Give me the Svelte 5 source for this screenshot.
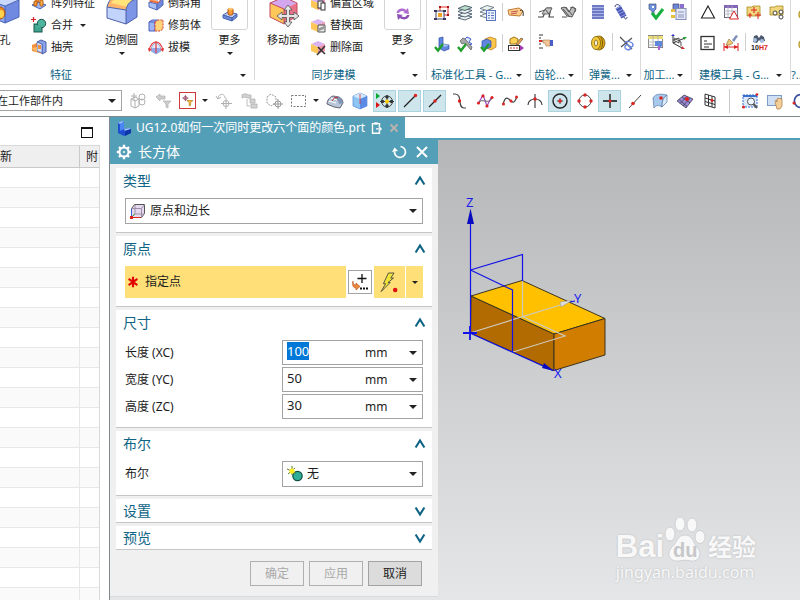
<script>
  import { onMount } from 'svelte';

  const cube = (a, b, c) =>
    `<path d="M1 5 8 2l7 3-7 3z" fill="${a}"/><path d="M1 5l7 3v7l-7-3z" fill="${b}"/><path d="M15 5 8 8v7l7-3z" fill="${c}"/>`;
  const tick = '<path d="M1 11l3 3.500 5-6.500" fill="none" stroke="#1f9e2c" stroke-width="2.400"/>';

  const icons = {
    hole: `<path d="M4 7 20 1l10 4-16 6z" fill="#c9d8fb"/><path d="M4 7l12 4v17L4 23z" fill="#8fa9ef"/><path d="M30 5 16 11v17l14-6z" fill="#6f8ae0"/><path d="M4 7l12 4 14-6M16 11v17M4 23l12 5 14-6V5" fill="none" stroke="#4a62b4"/><ellipse cx="11" cy="18" rx="5" ry="6" fill="#f08a1c" stroke="#b0530c"/><ellipse cx="12" cy="19" rx="3" ry="4" fill="#ffd34c"/>`,
    blend: `<path d="M1 12 C3 4 7 2 12 1l19 3c-5 1-9 4-11 11z" fill="#ffb66b"/><path d="M5 8c2-3 5-5 9-5l16 2c-4 1-7 4-8 7z" fill="#ffe37a"/><path d="M12 1l5-3 14 3v3z" fill="#c5d3f7"/><path d="M1 12l19 3v14L1 23z" fill="#c2d4fb"/><path d="M20 15c1-6 5-10 11-11v18l-11 7z" fill="#7d95e6"/><path d="M1 12C3 4 7 2 12 1l19 3c-6 1-10 5-11 11zM1 12v11l19 6V15M20 29l11-7V4" fill="none" stroke="#4a5fa8"/>`,
    moveFace: `<path d="M2 8 16 2l13 6-13 6z" fill="#d3a6ee"/><path d="M2 8l14 6v15L2 22z" fill="#ffc65a"/><path d="M29 8 16 14v15l13-8z" fill="#e9728a"/><path d="M2 8 16 2l13 6M2 8v14l14 7 13-8V8M2 8l14 6v15" fill="none" stroke="#c14b60"/><path d="M20 10l4 5h-2.500v4.500H26V17l5 4-5 4v-2.500h-4.500V27H24l-4 5-4-5h2.500v-4.500H14V25l-5-4 5-4v2.500h4.500V15H16z" fill="#e6e6e6" stroke="#5c5c5c" stroke-width=".9"/>`,
    pattern: `<path d="M1 10l6-3 8 3-6 4z" fill="#9db7f4" stroke="#4967b4"/><rect x="5" y="1" width="3" height="6" rx="1" fill="#ff9b33" stroke="#b4560e"/><rect x="9" y="5" width="3" height="6" rx="1" fill="#ffb84c" stroke="#b4560e"/><rect x="3" y="6" width="3" height="5" rx="1" fill="#ffa03a" stroke="#b4560e"/>`,
    unite: `<path d="M2.500 0v5M0 2.500h5" stroke="#e02020" stroke-width="1.200"/><rect x="3" y="7" width="8" height="8" fill="#3fa48f" stroke="#1b5549"/><circle cx="10.500" cy="6.500" r="4.200" fill="#4fb59f" stroke="#1b5549"/><path d="M4 8h6v3H5z" fill="#46ab96"/>`,
    shell: `<path d="M1 6l5-2v6l6 2v3L1 12z" fill="#f6913a"/><path d="M6 3l4-2 5 2v10l-4 2V5z" fill="#8ba3ea" stroke="#4a5fa8"/><path d="M6 3l5 2v9l-5-2z" fill="#d4dffb" stroke="#4a5fa8" stroke-width=".7"/><path d="M7 6h3v4H7z" fill="#f0923b"/><path d="M0 9l6-1v5z" fill="#ffb866"/>`,
    chamfer: `<path d="M1 4 7 0h8l-5 5z" fill="#c9d8fb" stroke="#5068b8"/><path d="M1 4l9 2v2L2 7z" fill="#ff9455"/><path d="M1 7l8 2v6l-8-3z" fill="#a9c0f7" stroke="#5068b8"/><path d="M9 9l6-6v7l-6 5z" fill="#7088dc" stroke="#5068b8"/><path d="M2 6 10 8l4-5" stroke="#e05533" fill="none"/>`,
    trim: `<path d="M1 5l3-2h6v9l-3 2H1z" fill="#9fb4f5" stroke="#4a5fc0"/><path d="M1 5h6v9" fill="none" stroke="#4a5fc0"/><path d="M7 5l3-2h5v9l-3 2H7z" fill="#ffd478" stroke="#d33a3a" stroke-dasharray="2 1"/>`,
    draft: `<path d="M8 3l4 4 1 5-5 3-5-3 1-5z" fill="#dfe7fb" stroke="#7d8bb8" stroke-width=".7"/><path d="M4.500 9h7l1.500 3-5 3-5-3z" fill="#8fa9ef"/><path d="M1 11C3 4 6 3 8 3s5 1 7 8M8 2v12" fill="none" stroke="#e23b3b" stroke-width="1.200"/><path d="M0 9l1 4 3-3zM16 9l-1 4-3-3z" fill="#e23b3b"/>`,
    boss: `<path d="M1 9l5-3 9 2-5 4z" fill="#bccdf8" stroke="#4a65b0"/><path d="M1 9v3l9 3v-3zM10 12v3l5-4V8z" fill="#6f8bde" stroke="#4a65b0"/><path d="M6 3v5c1 1.500 4 1.500 5 0V3z" fill="#ff9b33" stroke="#b4560e"/><ellipse cx="8.500" cy="3" rx="2.500" ry="1.200" fill="#ffc46b"/>`,
    cycle: `<path d="M1.500 7C2 3 7 1 11 4l2-2 1 6-6-1 2-1C7 4 5 5 4 7z" fill="#b06bd0"/><path d="M14.500 9c-.5 4-5.500 6-9.500 3l-2 2-1-6 6 1-2 1c3 2 5 1 6-1z" fill="#8b4fb5"/>`,
    offset: cube('#d9b4f0', '#ffc65a', '#ef94a8') + '<rect x="8" y="6" width="5" height="7" fill="#fff" stroke="#333"/><rect x="11" y="8" width="4" height="7" fill="#fff" stroke="#333"/>',
    replace: cube('#d9b4f0', '#ffc65a', '#ef94a8') + '<path d="M8 8h7v7H8z" fill="#eee" stroke="#555"/><path d="M9 11l5-2v3l-5 2z" fill="#999"/>',
    remove: cube('#d9b4f0', '#ffc65a', '#ef94a8') + '<path d="M8 8l7 7M15 7l-8 9" stroke="#333" stroke-width="1.500"/>',
    frames: `<rect x="6" y="2" width="8" height="8" fill="#fff" stroke="#d33"/><path d="M5 1h2v2H5zM13 1h2v2h-2zM13 9h2v2h-2z" fill="#a11"/><rect x="2" y="6" width="8" height="8" fill="#fff" stroke="#446"/><rect x="4" y="8" width="4" height="4" fill="#f4a025"/><path d="M0 5h3v2H0zM9 5h3v2H9zM0 13h3v2H0zM9 13h3v2H9z" fill="#3b3560"/>`,
    layers: `<g fill="#eef3f3" stroke="#456" stroke-width=".9"><path d="M1 13l7-3 7 2-7 3z"/><path d="M1 10l7-3 7 2-7 3z"/><path d="M1 6.500l7-3 7 2-7 3z"/><path d="M1 3.500l7-3 7 2-7 3z" fill="#b8dcc8"/></g>`,
    layerList: `<g fill="#eef3f3" stroke="#567" stroke-width=".8"><path d="M0 11l7-3 7 2-7 3z"/><path d="M0 7l7-3 7 2-7 3z"/><path d="M0 3.500l7-3 7 2-7 3z"/></g><rect x="6.500" y="5.500" width="9" height="10" fill="#eaf2ff" stroke="#5a75c0"/><path d="M8 8h2M11 8h3M8 10.500h2M11 10.500h3M8 13h2M11 13h3" stroke="#5a75c0"/>`,
    tag: `<path d="M0 5l11-2 4 3-3 5-11-1z" fill="#ffcf8a" stroke="#c07a35"/><path d="M3 7l7-1M3 9l6-1" stroke="#b55"/><path d="M12 6c2-3 4 1 3 5" fill="none" stroke="#333"/>`,
    checkPart: `<path d="M5 2l4-1v7l6 1v4l-5 2-5-3z" fill="#5f86e0" stroke="#2f4ea8" stroke-width=".7"/><path d="M9 8l6 1-4 2-5-2z" fill="#a9c2f7"/>` + tick,
    checkSketch: `<path d="M5 6l5-5 4 2-2 3 3 2-4 1" fill="#dce7fb" stroke="#3f5fd0"/><path d="M3 5l3-3 2 1 7 8-1 3-6-7-3 1z" fill="#a8a8a8" stroke="#555" stroke-width=".7"/>` + tick,
    checkAsm: `<path d="M5 3l5-2 6 2v8l-5 3-6-3z" fill="#ffc64c" stroke="#b07714" stroke-width=".7"/><path d="M2 5l5-2 4 2v6l-5 2-4-2z" fill="#5f86e0" stroke="#2f4ea8" stroke-width=".7"/>` + tick,
    partEdit: `<path d="M2 3l4-2 4 2v5H2z" fill="#ffd257" stroke="#9b7414"/><path d="M8 8l5-6 2 1-5 6z" fill="#f7a13a" stroke="#555" stroke-width=".7"/><rect x=".5" y="9.500" width="11" height="5" fill="#fff" stroke="#333"/><path d="M2 12h2M5 12h2M8 12h2" stroke="#d33"/><path d="M12 9l4 3-4 3z" fill="#a239b3"/>`,
    gearA: `<path d="M0 13h5l4-9h4l-2 9h5" fill="none" stroke="#444" stroke-width="1.200"/><path d="M4 10l4-6 6 0-3 6z" fill="#c4c4c4" stroke="#555" stroke-width=".8"/><path d="M7 5l4 5M1 8l6-2" stroke="#555"/>`,
    gearB: `<path d="M0 4l4-1 4 5 3-5 4 2-4 8-5-1z" fill="#bdbdbd" stroke="#444" stroke-width=".9"/><path d="M2 5l6 7M5 3l6 8M9 4c4-2 6 0 5 4M1 13h5" fill="none" stroke="#555"/>`,
    gearPick: `<path d="M1 1h4M1 4h2M1 7h4M1 10h2M1 14h4" stroke="#333"/><path d="M1 7h3" stroke="#d22" stroke-width="2"/><path d="M5 6h7v6H8l-1-3H5z" fill="#f4c79a" stroke="#a97744" stroke-width=".6"/><rect x="12" y="6" width="3" height="6" fill="#4a5cc8"/>`,
    springA: `<g fill="none" stroke="#3f4fae" stroke-width="1.700"><path d="M2 2h12M2 5h12M2 8h12M2 11h12M2 14h12"/></g><path d="M2 3.500h12M2 6.500h12M2 9.500h12M2 12.500h12" stroke="#aab4ea"/>`,
    springB: `<path d="M5 3l6 10" stroke="#4756b5" stroke-width="6"/><path d="M3 5l5-3M4 8l6-3M6 10l6-3M7 13l6-3" stroke="#aab4ea" stroke-width=".8"/><path d="M2 3c0-3 4-3 5-1M11 13c1 3 3 2 3 0" fill="none" stroke="#333a80"/>`,
    springC: `<ellipse cx="9" cy="8" rx="6" ry="7" fill="#d9a514" stroke="#7c5c06" stroke-width=".8"/><ellipse cx="6" cy="8" rx="4.500" ry="6.500" fill="#f3ca3c" stroke="#7c5c06" stroke-width=".8"/><ellipse cx="6" cy="8" rx="1.500" ry="3" fill="#fff" stroke="#7c5c06" stroke-width=".8"/><path d="M11 2c2 3 2 9 0 12" stroke="#7c5c06" fill="none"/>`,
    springD: `<path d="M2 2l12 12M14 3L3 12" stroke="#555" stroke-width="1.300"/><path d="M7 8c2-3 8-1 8 2s-4 2-5 0-5 2-2 4 6 0 4-3" fill="none" stroke="#5f7ee0" stroke-width="1.300"/>`,
    machCheck: `<path d="M1 0h7v5L6 7v3H4V7L1 5z" fill="#6e92de" stroke="#457" stroke-width=".7"/><path d="M4 2h2v2H4z" fill="#fff"/><path d="M4 9l4 5 7-9" fill="none" stroke="#17b03f" stroke-width="3"/>`,
    machList: `<path d="M2 0h6v5L6 7H4L2 5z" fill="#6a86da" stroke="#446" stroke-width=".7"/><rect x="5" y="4.500" width="10" height="11" fill="#e4e9f8" stroke="#8890b8"/><path d="M7 8h6M7 11h6M7 13h6" stroke="#8890b8"/><path d="M0 5h4v3H0zM0 11h4v3H0z" fill="#e8bf3c"/><path d="M9 0h4v4H9z" fill="#8a6fd0"/>`,
    machTable: `<rect x=".5" y="1.500" width="14" height="12" fill="#fff" stroke="#888"/><path d="M0 2h15v3H0z" fill="#e9dd78"/><path d="M0 8h15M0 11h15M5 2v11M10 2v11" stroke="#aaa" stroke-width=".8"/><path d="M7 7h7v5l-2 2-2-2H7z" fill="#5e86da"/><path d="M10 12h2v4h-2z" fill="#b05fd0"/>`,
    machAxis: `<path d="M2 1v8l9 5M2 9l12-5" fill="none" stroke="#333"/><path d="M3 4l7 4v4M2 6l6-2v5z" fill="#eee" stroke="#444" stroke-width=".9"/><path d="M12 3l4 0-3 3z" fill="#1fa030"/><path d="M11 12l3 3-4 0z" fill="#c33"/><path d="M0 2l2-2 2 2z" fill="#33c"/>`,
    triangle: `<path d="M8 2l6.500 12h-13z" fill="none" stroke="#222" stroke-width="1.100"/>`,
    gridWarn: `<rect x="1.500" y="1.500" width="13" height="12" fill="#fff" stroke="#667"/><path d="M1 1h14v3H1z" fill="#8466b8"/><path d="M1 7h14M1 10h14M5 2v12M9 2v12" stroke="#aab" stroke-width=".8"/><path d="M11 7l4.500 8h-9z" fill="#fff" stroke="#d22"/>`,
    folderPts: `<path d="M1 3h5l1-1h7v10H1z" fill="#f0d67c" stroke="#a88a20" stroke-width=".8"/><path d="M8 3v6M5 6h6M12 8v7M9 11h6M4 9v5M2 11h4" stroke="#d22"/>`,
    folderNodes: `<path d="M1 3h5l1-1h7v9H1z" fill="#f0d67c" stroke="#a88a20" stroke-width=".8"/><g fill="#fff" stroke="#333" stroke-width=".9"><circle cx="6" cy="9" r="2"/><circle cx="12" cy="8" r="2"/><circle cx="12" cy="13" r="2"/></g>`,
    note: `<rect x="1" y="1.500" width="13" height="13" fill="#fff" stroke="#333" stroke-width="1.300"/><path d="M4 6h3M4 9h8M4 12h5" stroke="#333"/>`,
    dimBrush: `<path d="M1 8v8M15 8v8M1 12h14" stroke="#d22"/><path d="M1 12l4-2v4zM15 12l-4-2v4z" fill="#d22"/><path d="M6 4l4 4-3 2H3z" fill="#f0c878" stroke="#98713a" stroke-width=".7"/><path d="M9 5l4-5 2 1-4 6z" fill="#7c90b8"/>`,
    fit: `<path d="M3 1l3-1 2 3 2-3 3 2 1 4-4 1-2-2-2 3-4-1z" fill="#4d5a6e"/><circle cx="4" cy="5" r="2" fill="#a8c0e0"/><circle cx="11" cy="6" r="2" fill="#a8c0e0"/><text x="0" y="15" font-size="7" font-weight="700" font-family="Liberation Sans" fill="#222">10</text><text x="8" y="15" font-size="7" font-weight="700" font-family="Liberation Sans" fill="#d22">H7</text>`,
    lock: `<path d="M3 8V5c0-5 9-5 9 0v3" fill="none" stroke="#a88a20"/><rect x="1" y="7" width="13" height="7" rx="2" fill="#efd150" stroke="#a88a20"/>`,
    gCubes: `<g fill="none" stroke="#b0b0b0"><path d="M1 6l4-2 4 2v7l-4 2-4-2zM1 6l4 2 4-2M5 8v7"/><circle cx="12" cy="4" r="3"/><circle cx="12" cy="9" r="3"/><path d="M4 0v8M1 3h6"/></g>`,
    gUndoFilter: `<g fill="#cdcdcd" stroke="#b4b4b4" stroke-width=".8"><path d="M1 4l4-3v2h5v3H5v2z"/><path d="M8 8h8l-3 3v4l-2-1v-3z"/></g>`,
    filter: `<path d="M5 0v9M.5 4.500h9" stroke="#8c2c4c"/><circle cx="5" cy="4.500" r="2.500" fill="none" stroke="#8c2c4c"/><path d="M7 8h9l-3.500 3v4l-2 1v-5z" fill="#ffc23c" stroke="#b07714"/>`,
    gRotate: `<g fill="none" stroke="#b0b0b0"><path d="M2 6C2 0 9 0 9 5M0 3l2 3 3-2M10 5v11M5 10.500h11"/><circle cx="10" cy="10.500" r="3"/></g>`,
    gCopy: `<g fill="#d2d2d2" stroke="#b0b0b0" stroke-width=".8"><path d="M1 2c4-3 6 1 9 0v3C7 6 5 3 1 5z"/><path d="M9 6h5v4H9zM10 11h6v4h-6z"/><path d="M6 6v7h3" fill="none"/></g>`,
    gCubeSel: `<path d="M1 4l4-3 5 3v6l-5 3-4-3z" fill="none" stroke="#999" stroke-dasharray="2 1"/><circle cx="12" cy="11" r="3" fill="#fff" stroke="#999"/><path d="M12 6v10M7 11h10" stroke="#999"/>`,
    rectSel: `<rect x=".5" y="2.500" width="14" height="11" fill="none" stroke="#777" stroke-dasharray="2 1.500"/>`,
    faceBlue: `<path d="M0 11c0-4 3-7 6-8l6 1c2 1 4 3 4 6l-3 5-6-1z" fill="#b9c6d8" stroke="#445" stroke-width=".8"/><path d="M6 3l6 1c2 1 4 3 4 6l-4 1c0-3-2-4-4-5z" fill="#7f93b4"/><path d="M4 5l6 2M2 8l7 2" stroke="#fff" stroke-width="1.300"/><path d="M5 8l3-4 3 1" stroke="#c33" fill="none"/>`,
    cubeBlue: `<path d="M1 3l7-3 7 3v10l-7 3-7-3z" fill="#8cc4f4" stroke="#5a86d4" stroke-width=".7"/><path d="M1 3l7 3 7-3-7-3z" fill="#cfe8fb"/><path d="M8 6v10l7-3V3z" fill="#5a8ae4"/><path d="M8 1v10" stroke="#d33" stroke-width=".8"/>`,
    snapAll: `<path d="M-1 0l4 3-4 3z" fill="#0a3"/><path d="M-1 9l4 3-4 3z" fill="#d11"/><circle cx="10" cy="8.500" r="5.500" fill="none" stroke="#222" stroke-width=".8"/><path d="M10 2v13M3 8.500h14" stroke="#222" stroke-width=".8"/><g fill="#333"><circle cx="10" cy="4" r="1.700"/><circle cx="10" cy="13" r="1.700"/><circle cx="5.500" cy="8.500" r="1.700"/><circle cx="14.500" cy="8.500" r="1.700"/></g><circle cx="10" cy="8.500" r="2" fill="#ffd000"/>`,
    endPt: `<path d="M2 14L13 3" stroke="#222" stroke-width="1.300"/><circle cx="13.500" cy="2.500" r="1.700" fill="#d22"/>`,
    midPt: `<path d="M2 14L14 2" stroke="#222" stroke-width="1.300"/><circle cx="8" cy="8" r="1.700" fill="#d22"/>`,
    ctrlPt: `<path d="M1 1h2c8 0 2 14 9 14h2" fill="none" stroke="#444" stroke-width="1.200"/><circle cx="7.500" cy="8" r="1.700" fill="#d22"/>`,
    polePt: `<path d="M1 11L6 2l4 11 4-8" fill="none" stroke="#a24bc0" stroke-width="1.200"/><path d="M1 11c3-8 11 2 14-6" fill="none" stroke="#666"/><g fill="#d22"><circle cx="1.500" cy="10" r="1.600"/><circle cx="6" cy="3" r="1.600"/><circle cx="10" cy="13" r="1.600"/><circle cx="15" cy="4.500" r="1.600"/></g>`,
    splinePt: `<path d="M1 12C3 2 6 5 9 8s4 0 6-4" fill="none" stroke="#444" stroke-width="1.200"/><g fill="#d22"><circle cx="1.500" cy="11" r="1.500"/><circle cx="9" cy="8" r="1.500"/><circle cx="14.500" cy="4" r="1.500"/></g>`,
    interPt: `<path d="M8 1v14M1 12C1 4 15 4 15 12" fill="none" stroke="#444" stroke-width="1.200"/><circle cx="8" cy="6" r="1.700" fill="#d22"/>`,
    arcCtr: `<circle cx="8" cy="8" r="7" fill="none" stroke="#222" stroke-width="1.400"/><path d="M8 5v6M5 8h6" stroke="#222" stroke-width=".8"/><circle cx="8" cy="8" r="1.800" fill="#d22"/>`,
    quadPt: `<circle cx="8" cy="8" r="6" fill="none" stroke="#444"/><g fill="#d22"><circle cx="8" cy="2" r="1.700"/><circle cx="8" cy="14" r="1.700"/><circle cx="2" cy="8" r="1.700"/><circle cx="14" cy="8" r="1.700"/></g>`,
    existPt: `<path d="M8 1v14M1 8h14" stroke="#111" stroke-width="1.300"/><circle cx="8" cy="8" r="1.600" fill="#d22"/>`,
    onCurve: `<path d="M2 15L14 2" stroke="#444"/><circle cx="6" cy="10.500" r="1.800" fill="#d22"/>`,
    onFace: `<path d="M1 5c3-5 8-4 14-3-4 3-5 5-5 12-3-2-6-2-8 1z" fill="#a9c9ec" stroke="#4f74a4" stroke-width=".7"/><path d="M10 14c0-6 1-9 5-12v7z" fill="#dcebf9" stroke="#4f74a4" stroke-width=".7"/><circle cx="9" cy="5" r="1.800" fill="#d22"/>`,
    mesh: `<path d="M0 8l7-6 9 4-7 9z" fill="#9a8ad4" stroke="#445" stroke-width=".8"/><path d="M2 6.500l8 7M5 4l8 6M3 10.500l7-7M6 13l7-8" stroke="#334" stroke-width=".7"/><circle cx="10" cy="6" r="2" fill="#d22"/>`,
    grid: `<path d="M3 1l10 3v11L3 12zM3 5l10 3M3 8.500l10 3M6.500 2v11M10 3v11" fill="none" stroke="#333"/><circle cx="10" cy="7.500" r="1.400" fill="#d22"/>`,
    zoomWin: `<path d="M1 2h14v12H1z" fill="#dce9fb" stroke="#3b6fd0" stroke-dasharray="2 1"/><path d="M1 2h14v2H1z" fill="#3b6fd0"/><circle cx="9" cy="8.500" r="3.500" fill="#eef6ff" stroke="#555"/><path d="M11.500 11l3.500 4" stroke="#555" stroke-width="2"/><circle cx="1.500" cy="14" r="1.500" fill="#d22"/><circle cx="15" cy="1.500" r="1.300" fill="#d22"/>`,
    pan: `<rect x=".5" y="2.500" width="14" height="10" fill="#cfe0f5" stroke="#7e9cc4"/><path d="M8 9l1-2 1 2V6l1-1 1 1 1-1 1 1 1 0v7l-2 3h-3z" fill="#f4cf98" stroke="#a97744" stroke-width=".7"/>`,
    orbit: `<path d="M14 4A6.500 6.500 0 1 0 14 12" fill="none" stroke="#3b4fa0" stroke-width="1.700"/><circle cx="2" cy="10" r="1.500" fill="#d22"/>`,
    part: `<path d="M2 3l4-2 2 1v7l5-1 2 1v4l-7 3-6-3z" fill="#1d4fd0"/><path d="M2 3l4-2 2 1-4 2zM8 9l5-1 2 1-6 2z" fill="#9cc0ff"/><path d="M4 4l4-2v7l-4 2z" fill="#4a86f4"/><path d="M9 11l6-2v4l-6 3z" fill="#0d36a8"/>`,
    gear: `<g stroke="#fff" fill="none"><circle cx="8" cy="8" r="4.500" stroke-width="2"/><path d="M8 .8v3M8 12.200v3M.8 8h3M12.200 8h3M3 3l2 2M11 11l2 2M13 3l-2 2M5 11l-2 2" stroke-width="2.400"/></g><circle cx="8" cy="8" r="1" fill="#fff"/>`,
    reset: `<path d="M8.500 2.500a5.500 5.500 0 1 1-6 5" fill="none" stroke="#fff" stroke-width="1.700"/><path d="M0 8l2.500-4.500L6 7z" fill="#fff"/>`,
    close: `<path d="M3 3l10 10M13 3L3 13" stroke="#fff" stroke-width="2"/>`,
    tabClose: `<path d="M4 4l8 8M12 4l-8 8" stroke="#b9b2ae" stroke-width="2.200"/>`,
    modified: `<path d="M12 6V3H4v11h8v-2" fill="none" stroke="#fff" stroke-width="1.600"/><path d="M6 1.500h4V4H6z" fill="#fff"/><path d="M8 9h6M11 6l3 3-3 3" fill="none" stroke="#fff" stroke-width="1.300"/>`,
    box: `<path d="M1.500 5.500l3-4h10v9l-3 4h-10z" fill="#e6d8ee" stroke="#555"/><path d="M2 5.500h9.500V14M11.500 5.500l3-4M5 2v9h9M5 11l-3 3" fill="none" stroke="#9b90a8"/><path d="M1.500 14V6" stroke="#3b5fd0"/><path d="M1.500 14.500h9" stroke="#d22"/><path d="M2 14l2.500-3" stroke="#2a2"/><rect x="0" y="13" width="3" height="3" fill="#d22"/>`,
    star: `<path d="M8 2v12M3 4.500l10 7M13 4.500l-10 7" stroke="#e00000" stroke-width="2.400"/>`,
    pointDlg: `<path d="M10 0v9M5.500 4.500h9" stroke="#111" stroke-width="1.300"/><path d="M1 7c0 3 1 4 3 4V9l4 3.500L4 16v-2C1 14 0 11 1 7z" fill="#f0883a" stroke="#b24c10" stroke-width=".6"/><path d="M8 13.500h2v2H8zM11 13.500h2v2h-2zM14 13.500h2v2h-2z" fill="#111"/>`,
    bolt: `<path d="M7.500 0l5 0L9.500 4.500H12L7 8.500h2L1 16.500 5 9.500H3z" fill="#f4e636" stroke="#444" stroke-width=".8"/><circle cx="13.500" cy="15" r="2" fill="#e01010"/>`,
    none: `<circle cx="10.500" cy="10" r="4.700" fill="#2fae98" stroke="#124f45" stroke-width="1.200"/><path d="M5 0v9M0 3l9 4M1 8l7-6" stroke="#5a7a20"/><circle cx="5" cy="5" r="2.600" fill="#ffee20"/>`,
    up: `<path d="M3 12l5-8 5 8" fill="none" stroke="#0e6485" stroke-width="2.400"/>`,
    down: `<path d="M3 4l5 8 5-8" fill="none" stroke="#0e6485" stroke-width="2.400"/>`
  };

  const toolGroups = [
    { cls: 'std', title: '标准化工具 - G...', rows: [['frames', 'layers', 'layerList', '|', 'tag'], ['checkPart', 'checkSketch', 'checkAsm', '|', 'partEdit']] },
    { cls: 'gears', title: '齿轮...', rows: [['gearA', 'gearB'], ['gearPick']] },
    { cls: 'springs', title: '弹簧...', rows: [['springA', 'springB'], ['springC', '|', 'springD']] },
    { cls: 'mach', title: '加工...', rows: [['machCheck', 'machList'], ['machTable', 'machAxis']] },
    { cls: 'model', title: '建模工具 - G...', rows: [['triangle', 'gridWarn', 'folderPts', 'folderNodes'], ['note', 'dimBrush', '|', 'fit']] },
    { cls: 'more-tools', title: '?...', rows: [['lock'], ['lock']] }
  ];

  const selTools = [
    'gCubes', 'gUndoFilter', 'filter', 'v', 'gRotate', 'gCopy', 'gCubeSel', 'rectSel', 'v', 'faceBlue', 'cubeBlue',
    'snapAll', 'endPt', 'midPt', 'ctrlPt', 'polePt', 'splinePt', 'interPt', 'arcCtr', 'quadPt', 'existPt',
    'onCurve', 'onFace', 'mesh', 'grid', '|', 'zoomWin', 'pan', 'orbit'
  ];
  const active = ['snapAll', 'endPt', 'midPt', 'arcCtr', 'existPt'];

  let dims = $state([
    { id: 'xc', label: '长度 (XC)', value: '100' },
    { id: 'yc', label: '宽度 (YC)', value: '50' },
    { id: 'zc', label: '高度 (ZC)', value: '30' }
  ]);
  let open = $state({ type: true, origin: true, size: true, bool: true, settings: false, preview: false });
  const treeRows = Array.from({ length: 22 });

  onMount(() => {
    const first = document.getElementById('xc');
    first.focus();
    first.select();
  });
</script>

{#snippet icon(name, size = 16)}
  <svg class="i{size}" viewBox={size === 32 ? '0 0 32 32' : '0 0 16 16'} aria-hidden="true">{@html icons[name]}</svg>
{/snippet}

{#snippet item(name, text, menu = false)}
  <button class="item">{@render icon(name)}<span>{text}</span>{#if menu}<i class="tri"></i>{/if}</button>
{/snippet}

{#snippet more(name)}
  <button class="big more"><span class="frame">{@render icon(name)}</span><span class="name">更多</span><i class="tri"></i></button>
{/snippet}

{#snippet head(key, title)}
  <button type="button" class="head" aria-expanded={open[key]} onclick={() => (open[key] = !open[key])}>
    <span>{title}</span>{@render icon(open[key] ? 'up' : 'down', 14)}
  </button>
{/snippet}

<div class="app">
  <header class="ribbon">
    <section class="group feature">
      <div class="body">
        <button class="big hole">{@render icon('hole', 32)}<span class="name">孔</span></button>
        <div class="list">{@render item('pattern', '阵列特征')}{@render item('unite', '合并', true)}{@render item('shell', '抽壳')}</div>
        <button class="big">{@render icon('blend', 32)}<span class="name">边倒圆</span><i class="tri"></i></button>
        <div class="list">{@render item('chamfer', '倒斜角')}{@render item('trim', '修剪体')}{@render item('draft', '拔模')}</div>
        {@render more('boss')}
      </div>
      <footer><span>特征</span><i class="tri"></i></footer>
    </section>
    <section class="group sync">
      <div class="body">
        <button class="big">{@render icon('moveFace', 32)}<span class="name">移动面</span></button>
        <div class="list">{@render item('offset', '偏置区域')}{@render item('replace', '替换面')}{@render item('remove', '删除面')}</div>
        {@render more('cycle')}
      </div>
      <footer><span>同步建模</span><i class="tri"></i></footer>
    </section>
    {#each toolGroups as g}
      <section class="group {g.cls}">
        <div class="tools">
          {#each g.rows as row}
            <div class="row">
              {#each row as t}
                {#if t === '|'}<span class="vsep"></span>{:else}<button class="tool" aria-label={t}>{@render icon(t)}</button>{/if}
              {/each}
            </div>
          {/each}
        </div>
        <footer><span>{g.title}</span><i class="tri"></i></footer>
      </section>
    {/each}
  </header>

  <div class="selbar">
    <div class="combo scope">
      <select aria-label="选择范围"><option>在工作部件内</option></select>
      <i class="tri big-tri"></i>
    </div>
    {#each selTools as t}
      {#if t === '|'}
        <span class="bar"></span>
      {:else if t === 'v'}
        <button class="drop" aria-label="菜单"><i class="tri"></i></button>
      {:else}
        <button class="sel" class:on={active.includes(t)} class:boxed={t === 'filter'} aria-label={t}>{@render icon(t)}</button>
      {/if}
    {/each}
  </div>

  <div class="main">
    <aside>
      <div class="panelbar"><button class="max" aria-label="最大化"></button></div>
      <table>
        <thead><tr><th><span>新</span></th><th class="att"><span>附</span></th></tr></thead>
        <tbody>
          {#each treeRows as _}<tr><td></td><td></td></tr>{/each}
        </tbody>
      </table>
    </aside>

    <div class="work">
      <nav class="tabs">
        <div class="tab">
          {@render icon('part')}<span>UG12.0如何一次同时更改六个面的颜色.prt</span>
          {@render icon('modified', 14)}
          <button aria-label="关闭标签">{@render icon('tabClose', 14)}</button>
        </div>
      </nav>

      <div class="stage">
        <form class="dialog" onsubmit={(e) => e.preventDefault()}>
          <div class="title">
            {@render icon('gear')}<h1>长方体</h1>
            <button type="button" aria-label="重置">{@render icon('reset')}</button>
            <button type="button" aria-label="关闭">{@render icon('close')}</button>
          </div>

          <section class="sec">
            {@render head('type', '类型')}
            {#if open.type}
              <div class="content">
                <div class="combo">
                  {@render icon('box')}
                  <select aria-label="类型"><option>原点和边长</option></select>
                  <i class="tri big-tri"></i>
                </div>
              </div>
            {/if}
          </section>

          <section class="sec">
            {@render head('origin', '原点')}
            {#if open.origin}
              <div class="content point">
                <div class="pick">{@render icon('star', 14)}<span>指定点</span></div>
                <button type="button" class="dlg" aria-label="点对话框">{@render icon('pointDlg')}</button>
                <button type="button" class="infer" aria-label="自动判断的点">{@render icon('bolt', 18)}</button>
                <button type="button" class="infer-menu" aria-label="点类型"><i class="tri"></i></button>
              </div>
            {/if}
          </section>

          <section class="sec">
            {@render head('size', '尺寸')}
            {#if open.size}
              <div class="content dims">
                {#each dims as d}
                  <div class="line">
                    <label for={d.id}>{d.label}</label>
                    <div class="combo num">
                      <input id={d.id} bind:value={d.value} />
                      <select aria-label="单位"><option>mm</option></select>
                      <i class="tri big-tri"></i>
                    </div>
                  </div>
                {/each}
              </div>
            {/if}
          </section>

          <section class="sec">
            {@render head('bool', '布尔')}
            {#if open.bool}
              <div class="content">
                <div class="line">
                  <label for="bool">布尔</label>
                  <div class="combo">
                    {@render icon('none')}
                    <select id="bool"><option>无</option></select>
                    <i class="tri big-tri"></i>
                  </div>
                </div>
              </div>
            {/if}
          </section>

          <section class="sec closed">{@render head('settings', '设置')}</section>
          <section class="sec closed">{@render head('preview', '预览')}</section>

          <div class="actions">
            <button type="button" disabled>确定</button>
            <button type="button" disabled>应用</button>
            <button type="button" class="cancel">取消</button>
          </div>
        </form>

        <div class="view">
          <svg class="scene" viewBox="440 180 200 210">
            <g stroke="#3a3420" stroke-width="1" stroke-linejoin="round">
              <path d="M471 296 554 334V370.500L470.500 333z" fill="#b26b00" />
              <path d="M471 296 522 280.500 605 318.500 554 334z" fill="#ffc000" />
              <path d="M554 334 605 318.500V355L554 370.500z" fill="#d17d00" />
            </g>
            <path d="M522.500 281V316.500L565 336 513 352M470 333 562 304.500" fill="none" stroke="#cfc9bd" stroke-width="1.200" />
            <path d="M560 302l12-1.500-11 6.500z" fill="#dedede" stroke="#999" stroke-width=".6" />
            <g fill="none" stroke="#1212e6" stroke-width="1.200">
              <path d="M470.500 333V222" />
              <path d="M463 333h14M470 326v14" stroke-width="1.800" />
              <path d="M470.500 270 522.500 254.500V281M470.500 270 512.500 290V352M470 333 553 370.500M570 302l5-1" />
            </g>
            <path d="M470.500 208.500l3.500 15.500h-7zM542 368l2-5 10 8z" fill="#0a0ac0" />
            <g fill="#1a1af0" font-size="13">
              <text x="466" y="207">Z</text><text x="574" y="303">Y</text><text x="554" y="378">X</text>
            </g>
          </svg>

          <div class="mark">
            <div class="logo">
              <span class="bai">Bai</span>
              <span class="paw">
                <svg viewBox="0 0 42 46" aria-hidden="true">
                  <g fill="#f8f8f8" stroke="#cfd0d2"><ellipse cx="6" cy="18" rx="5" ry="7" /><ellipse cx="16" cy="8" rx="5" ry="7" /><ellipse cx="28" cy="9" rx="5" ry="7" /><ellipse cx="36" cy="21" rx="5" ry="6.500" />
                    <path d="M21 19c8 0 8 8 12 12 6 7 2 15-6 14-4-1-8-1-12 0-10 1-13-8-7-14 5-4 5-12 13-12z" /></g>
                </svg>
                <b>du</b>
              </span>
              <span class="jy">经验</span>
            </div>
            <div class="url">jingyan.baidu.com</div>
          </div>
        </div>
      </div>
    </div>
  </div>
</div>

<style>
  :global(body) { margin: 0; }
  .app {
    height: 100vh; display: flex; flex-direction: column; overflow: hidden; background: #fff; color: #1c1c1c;
    font: 12px/16px "Noto Sans", "Noto Sans CJK SC", sans-serif;
  }
  .app * { box-sizing: border-box; }
  button, select, input { font: inherit; color: inherit; background: none; border: 0; padding: 0; margin: 0; border-radius: 0; outline: 0; }
  svg { display: block; flex: none; overflow: visible; }
  .i14 { width: 14px; height: 14px; }
  .i16 { width: 16px; height: 16px; }
  .i18 { width: 18px; height: 18px; }
  .i32 { width: 32px; height: 32px; }
  .tri { width: 0; height: 0; flex: none; border: 3px solid transparent; border-top-color: #222; border-bottom: 0; }
  .big-tri { border-width: 4px; border-bottom: 0; }

  .ribbon { display: flex; align-items: flex-start; flex: none; height: 85px; overflow: hidden; border-bottom: 1px solid #d2d2d2; font-size: 11px; }
  .group { flex: none; height: 80px; border-right: 1px solid #d9d9d9; }
  .feature { width: 255px; }
  .sync { width: 172px; }
  .std { width: 104px; }
  .gears { width: 52px; }
  .springs { width: 58px; }
  .mach { width: 51px; }
  .model { width: 99px; }
  .more-tools { flex: 1; min-width: 0; border: 0; }
  .body { display: flex; gap: 10px; height: 75px; margin-top: -8px; }
  .sync .body { padding-left: 12px; }
  .hole { margin-left: -11px; }
  .big { display: flex; flex-direction: column; align-items: center; padding-top: 3px; min-width: 32px; flex: none; }
  .big .name { margin: 5px 0 4px; line-height: 16px; }
  .more { width: 37px; padding: 0; }
  .frame { display: flex; width: 37px; height: 38px; margin-bottom: -3px; padding: 13px 0 0 10px; border: 1px solid #d5d5d5; border-radius: 3px; }
  .list { display: flex; flex-direction: column; flex: none; }
  .item { display: flex; align-items: center; gap: 4px; height: 22px; flex: none; }
  .item .tri { margin-left: 3px; }
  footer { display: flex; align-items: center; height: 16px; padding-right: 8px; color: #0e6485; white-space: nowrap; }
  footer span { flex: 1; text-align: center; }
  .feature footer span { text-align: left; padding-left: 50px; }
  .tools { display: flex; flex-direction: column; gap: 14px; height: 67px; padding: 4px 0 0 7px; }
  .model .tools { padding-left: 8px; }
  .row { display: flex; gap: 7px; }
  .vsep { width: 1px; height: 18px; margin: -1px -2px 0 -1px; background: #cfcfcf; }

  .selbar { display: flex; align-items: center; flex: none; gap: 2px; height: 32px; border-bottom: 1px solid #7f8a8c; font-size: 11px; }
  .combo { display: flex; align-items: center; position: relative; height: 26px; padding-left: 4px; background: #fff; border: 1px solid #a3a3a3; }
  .combo select { flex: 1; min-width: 0; height: 100%; appearance: none; padding: 0 20px 0 4px; }
  .combo .tri { position: absolute; right: 5px; top: 50%; margin-top: -2px; pointer-events: none; }
  .scope { flex: none; width: 126px; height: 21px; margin: 0 2px 0 -4px; padding-left: 0; }
  .scope select { padding-left: 0; }
  .sel { display: flex; align-items: center; justify-content: center; flex: none; width: 23px; height: 22px; }
  .on { background: #cde5eb; border: 1px solid #a9d3de; }
  .boxed svg { width: 17px; height: 17px; padding: 2px; border: 1px solid #d03838; }
  .drop { display: flex; justify-content: center; flex: none; width: 11px; margin-left: -2px; padding: 8px 0; }
  .bar { flex: none; width: 1px; height: 24px; margin: 0 6px; background: #c9c9c9; }

  .main { flex: 1; min-height: 0; display: flex; }
  aside { flex: none; width: 109px; overflow: hidden; }
  .panelbar { display: flex; justify-content: flex-end; height: 28px; padding: 10px 16px 0 0; }
  .max { width: 12px; height: 11px; border: 1px solid #111; border-top-width: 2px; }
  table { width: 100px; table-layout: fixed; border-collapse: separate; border-spacing: 0; border-top: 1px solid #d9d9d9; border-right: 1px solid #d9d9d9; }
  th { height: 22px; padding: 0; background: #efefef; border-bottom: 1px solid #c9c9c9; border-right: 1px solid #c9c9c9; font-weight: 400; text-align: left; }
  .att { width: 19px; padding-left: 6px; border-right: 0; }
  td { height: 20px; padding: 0; border-bottom: 1px solid #e7e7e7; border-right: 1px solid #e7e7e7; }
  td:last-child { border-right: 0; }
  tbody tr:nth-child(even) { background: #fafafa; }

  .work { flex: 1; min-width: 0; display: flex; flex-direction: column; border-left: 1px solid #7f8a8c; }
  .tabs { display: flex; flex: none; height: 23px; border-bottom: 2px solid #549fb8; }
  .tab { display: flex; align-items: center; gap: 4px; padding: 0 4px 0 6px; background: #549fb8; color: #fff; white-space: nowrap; }
  .stage { flex: 1; min-height: 0; display: flex; align-items: flex-start; background: linear-gradient(#b5b6b8, #e5e6e8); }

  .dialog { flex: none; width: 328px; background: #f0f0f0; padding-bottom: 10px; border-bottom: 1px solid #dadada; }
  .title { display: flex; align-items: center; gap: 6px; height: 24px; margin-bottom: 4px; padding: 0 8px 0 6px; background: #549fb8; color: #fff; }
  h1 { flex: 1; margin: 0; font-size: 14px; line-height: 20px; font-weight: 400; }
  .sec { margin: 0 6px 3px; background: #fff; border-bottom: 1px solid #c6c6c6; }
  .head { display: flex; align-items: center; justify-content: space-between; width: 100%; height: 26px; padding: 0 5px 0 7px; color: #0e6485; font-size: 14px; }
  .closed .head { height: 23px; }
  .content { padding: 4px 9px 8px; }
  .point { display: flex; align-items: center; gap: 2px; }
  .pick { flex: 1; display: flex; align-items: center; gap: 5px; height: 32px; padding-left: 1px; background: #ffe078; }
  .dlg { width: 24px; height: 24px; padding-left: 3px; border: 1px solid #a3a3a3; background: #fff; }
  .infer { width: 31px; height: 32px; padding-left: 6px; background: #ffe078; }
  .infer-menu { display: flex; align-items: center; justify-content: center; width: 17px; height: 32px; margin-left: -1px; background: #ffe078; }
  .dims { display: flex; flex-direction: column; gap: 2px; }
  .line { display: flex; align-items: center; justify-content: space-between; }
  .line .combo { width: 141px; }
  .line .num { height: 25px; }
  .num input { width: 74px; height: 18px; margin-bottom: 3px; font-size: 13px; line-height: 18px; }
  .num input::selection { background: #0078d7; color: #fff; }
  .actions { display: flex; justify-content: flex-end; gap: 5px; padding: 8px 16px 0 0; }
  .actions button { width: 54px; height: 25px; border: 1px solid #b0b0b0; }
  .actions button:disabled { color: #a9a9a9; }
  .actions .cancel { background: #dcdcdc; border-color: #a3a3a3; }

  .view { flex: 1; min-width: 0; align-self: stretch; position: relative; padding: 40px 0 0 2px; overflow: hidden; }
  .scene { width: 200px; height: 210px; }
  .mark { position: absolute; right: 44px; bottom: 18px; color: #f8f8f8; text-shadow: 0 0 2px #b4b5b8; }
  .logo { display: flex; align-items: flex-end; height: 48px; }
  .bai { font: 700 31px/30px "Liberation Sans", sans-serif; }
  .paw { position: relative; width: 42px; height: 46px; }
  .paw b { position: absolute; left: 9px; bottom: 2px; font: 700 20px/20px "Liberation Sans", sans-serif; color: #c6c7ca; text-shadow: none; }
  .jy { margin-left: 2px; font-size: 24px; line-height: 30px; font-weight: 700; }
  .url { font-size: 16px; line-height: 20px; }
</style>
